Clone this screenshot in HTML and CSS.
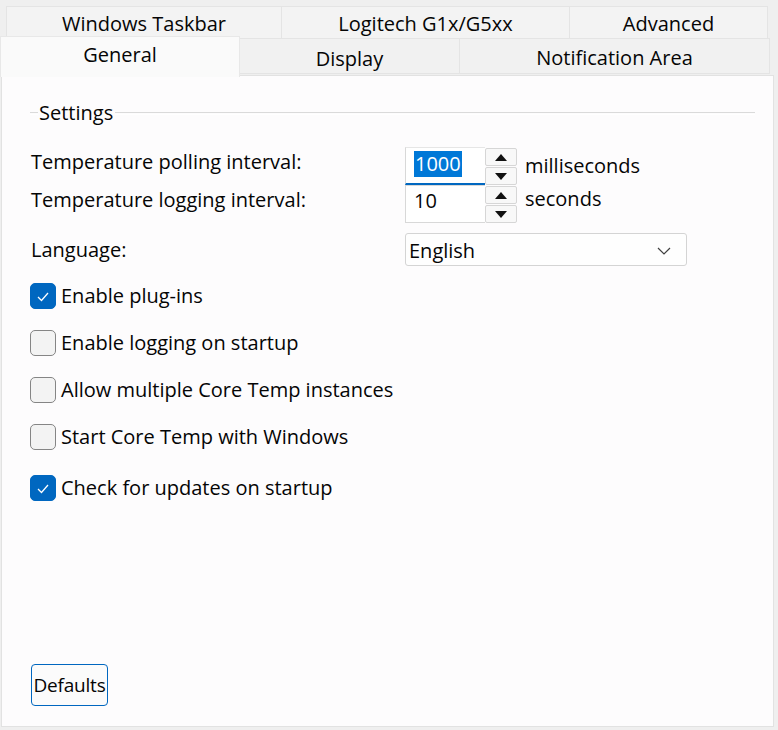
FILE: index.html
```html
<!DOCTYPE html>
<html>
<head>
<meta charset="utf-8">
<link rel="stylesheet" href="styles.css">
</head>
<body>
<div class="window">
  <div class="tabrow tabrow-back">
    <div class="tab tab-taskbar">Windows Taskbar</div>
    <div class="tab tab-logitech">Logitech G1x/G5xx</div>
    <div class="tab tab-advanced">Advanced</div>
  </div>
  <div class="tabrow tabrow-front">
    <div class="tab tab-general selected">General</div>
    <div class="tab tab-display">Display</div>
    <div class="tab tab-notify">Notification Area</div>
  </div>
  <div class="panel">
    <div class="group-title">
      <span class="gline gline-short"></span>
      <span class="gtext">Settings</span>
      <span class="gline gline-long"></span>
    </div>

    <div class="spin-block">
      <div class="spin-row">
        <div class="label label-spin">Temperature polling interval:</div>
        <div class="spin spin-focus">
          <div class="spin-input"><span class="sel">1000</span></div>
          <div class="spin-btns">
            <div class="spin-btn"><span class="tri-up"></span></div>
            <div class="spin-btn"><span class="tri-down"></span></div>
          </div>
        </div>
        <div class="unit unit-ms">milliseconds</div>
      </div>
      <div class="spin-row">
        <div class="label label-spin">Temperature logging interval:</div>
        <div class="spin">
          <div class="spin-input">10</div>
          <div class="spin-btns">
            <div class="spin-btn"><span class="tri-up"></span></div>
            <div class="spin-btn"><span class="tri-down"></span></div>
          </div>
        </div>
        <div class="unit unit-s">seconds</div>
      </div>
    </div>

    <div class="lang-row">
      <div class="label">Language:</div>
      <div class="combo">
        <span>English</span>
        <svg class="chev" width="14" height="8" viewBox="0 0 14 8"><polyline points="1,1 7,7 13,1" fill="none" stroke="#404040" stroke-width="1.2"/></svg>
      </div>
    </div>

    <div class="checks">
      <div class="check-row"><span class="cb on"><svg width="14" height="11" viewBox="0 0 14 11"><polyline points="2,6 5.5,9.5 12,2" fill="none" stroke="#fff" stroke-width="1.3"/></svg></span><span>Enable plug-ins</span></div>
      <div class="check-row"><span class="cb"></span><span>Enable logging on startup</span></div>
      <div class="check-row"><span class="cb"></span><span>Allow multiple Core Temp instances</span></div>
      <div class="check-row"><span class="cb"></span><span>Start Core Temp with Windows</span></div>
      <div class="check-row check-last"><span class="cb on"><svg width="14" height="11" viewBox="0 0 14 11"><polyline points="2,6 5.5,9.5 12,2" fill="none" stroke="#fff" stroke-width="1.3"/></svg></span><span>Check for updates on startup</span></div>
    </div>

    <div class="spacer"></div>
    <div class="btn">Defaults</div>
  </div>
</div>
</body>
</html>
```

FILE: styles.css
```css
html, body {
  margin: 0;
  padding: 0;
}
body {
  background: #efefef;
  font-family: "Open Sans", "Noto Sans", sans-serif;
  font-size: 20px;
  line-height: 26px;
  color: #050505;
  width: 778px;
  height: 730px;
  overflow: hidden;
}
.window {
  display: flex;
  flex-direction: column;
}
.tabrow {
  display: flex;
}
.tabrow-back {
  margin-left: 6px;
  padding-top: 6px;
  height: 31px;
}
.tab {
  box-sizing: border-box;
  display: flex;
  align-items: center;
  justify-content: center;
  border: 1px solid #e4e4e4;
  background: #f3f3f3;
  line-height: 1;
}
.tabrow-back .tab {
  height: 32px;
  border-bottom: none;
  padding-top: 2px;
}
.tab-taskbar { width: 276px; }
.tab-logitech { width: 288px; border-left: none; }
.tab-advanced { width: 198px; border-left: none; }

.tabrow-front {
  height: 38px;
  align-items: flex-end;
  position: relative;
  z-index: 2;
}
.tabrow-front .tab {
  height: 36px;
  margin-bottom: 1px;
  background: #f1f1f1;
}
.tab-general.selected {
  width: 240px;
  height: 41px;
  margin-bottom: -2px;
  background: #fafafa;
  border-color: #e8e8e8;
  border-bottom: none;
  align-items: flex-start;
  padding-top: 8px;
}
.tab-display { width: 220px; border-left: none; padding-top: 6px; }
.tab-notify { width: 310px; border-left: none; padding-top: 4px; }

.panel {
  box-sizing: border-box;
  margin-left: 1px;
  width: 773px;
  height: 652px;
  border: 1px solid #e2e2e2;
  background: #fdfcfd;
  padding: 25px 0 20px 28px;
  display: flex;
  flex-direction: column;
}
.group-title {
  display: flex;
  align-items: center;
  height: 24px;
  margin-right: 18px;
}
.gline {
  height: 1px;
  border-top: 1px solid #dadada;
  border-bottom: 1px solid #ffffff;
}
.gline-short { width: 8px; }
.gline-long { flex: 1; margin-left: 2px; }
.gtext { padding-left: 1px; }

.spin-block {
  margin-top: 22px;
  display: flex;
  flex-direction: column;
}
.spin-row {
  display: flex;
  align-items: flex-start;
}
.label {
  width: 375px;
  flex: none;
  padding-left: 1px;
  box-sizing: border-box;
}
.label-spin {
  margin-top: 2px;
}
.spin {
  display: flex;
  height: 38px;
}
.spin-input {
  box-sizing: border-box;
  width: 80px;
  height: 38px;
  border: 1px solid #d8d8d8;
  border-right: none;
  background: #fff;
  padding: 3px 0 0 8px;
  line-height: 24px;
}
.spin-focus .spin-input {
  border-bottom: 2px solid #0067c0;
  border-top-color: #e6e6e6;
  padding-left: 8px;
}
.sel {
  background: #0078d7;
  color: #fff;
  padding: 0 1px;
  display: inline-block;
  line-height: 26px;
}
.spin-btns {
  display: flex;
  flex-direction: column;
  width: 32px;
  gap: 1px;
  padding-top: 1px;
}
.spin-btn {
  box-sizing: border-box;
  flex: 1;
  border: 1px solid #d6d6d6;
  border-radius: 2px;
  background: #f8f8f8;
  display: flex;
  align-items: center;
  justify-content: center;
}
.tri-up, .tri-down {
  width: 0;
  height: 0;
  border-left: 6px solid transparent;
  border-right: 6px solid transparent;
}
.tri-up { border-bottom: 7px solid #111; }
.tri-down { border-top: 7px solid #111; }
.unit {
  margin-left: 8px;
}
.unit-ms { margin-top: 6px; }
.unit-s { margin-top: 1px; }

.lang-row {
  display: flex;
  align-items: center;
  margin-top: 10px;
}
.combo {
  box-sizing: border-box;
  width: 282px;
  height: 33px;
  border: 1px solid #d4d4d4;
  border-radius: 3px;
  background: #fefefe;
  display: flex;
  align-items: center;
  justify-content: space-between;
  padding: 2px 15px 0 3px;
}

.checks {
  margin-top: 17px;
  display: flex;
  flex-direction: column;
  gap: 21px;
}
.check-row {
  display: flex;
  align-items: center;
  height: 26px;
  gap: 5px;
}
.check-last { margin-top: 4px; }
.cb {
  box-sizing: border-box;
  width: 26px;
  height: 26px;
  border: 1px solid #858585;
  border-radius: 5px;
  background: #f3f3f3;
  display: flex;
  align-items: center;
  justify-content: center;
}
.cb.on {
  background: #0067c0;
  border-color: #0067c0;
}

.spacer { flex: 1; }
.btn {
  box-sizing: border-box;
  align-self: flex-start;
  margin-left: 1px;
  width: 77px;
  height: 42px;
  border: 1px solid #0067c0;
  border-radius: 4px;
  background: #fbfbfb;
  display: flex;
  align-items: center;
  justify-content: center;
  font-size: 19px;
  letter-spacing: -0.2px;
  line-height: 1;
}
```
